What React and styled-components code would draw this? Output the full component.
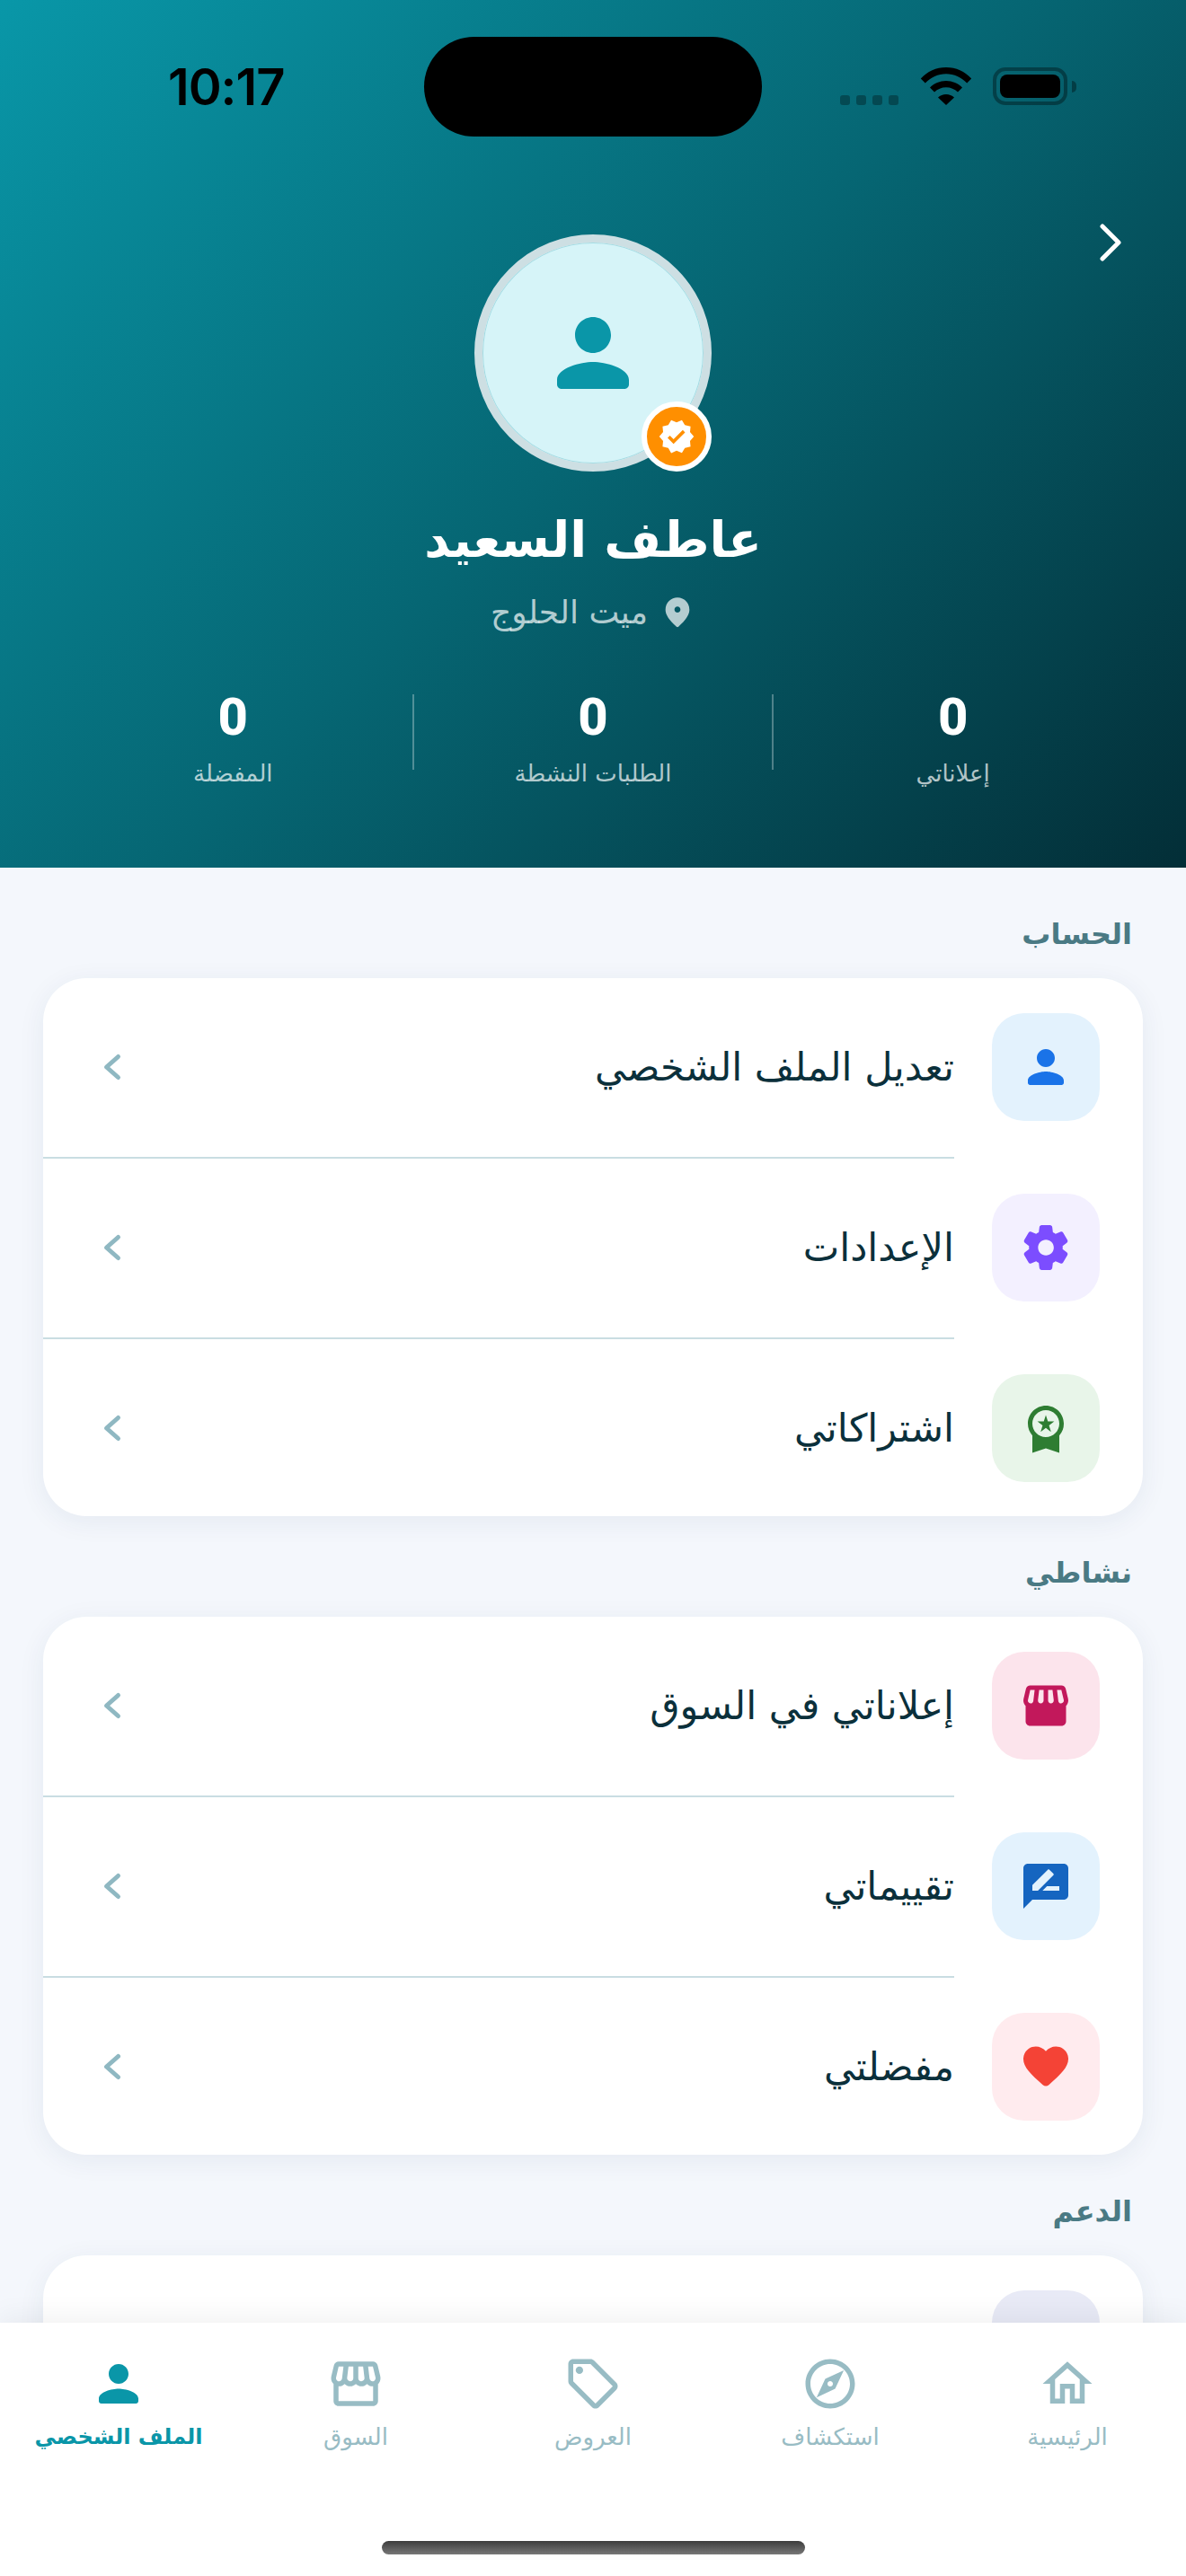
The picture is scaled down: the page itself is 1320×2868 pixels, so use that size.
import React from 'react';
import styled, { createGlobalStyle } from 'styled-components';
import {
  MdRateReview,
  MdOutlineStorefront,
  MdWorkspacePremium,
  MdVerified,
  MdOutlineHome,
  MdOutlineExplore,
  MdOutlineLocalOffer,
} from 'react-icons/md';

const FONT = '"DejaVu Sans", "Noto Sans", sans-serif';

const GlobalStyle = createGlobalStyle`
  html, body { margin: 0; padding: 0; background: #f4f7fc; }
  * { box-sizing: border-box; }
`;

const PERSON =
  'M12 12c2.21 0 4-1.79 4-4s-1.79-4-4-4-4 1.79-4 4 1.79 4 4 4zm0 2c-2.67 0-8 1.34-8 4v1c0 .55.45 1 1 1h14c.55 0 1-.45 1-1v-1c0-2.66-5.33-4-8-4z';
const GEAR =
  'M19.5 12c0-.23-.01-.45-.03-.68l1.86-1.41c.4-.3.51-.86.26-1.3l-1.87-3.23c-.25-.44-.79-.62-1.25-.42l-2.15.91c-.37-.26-.76-.49-1.17-.68l-.29-2.31c-.06-.5-.49-.88-.99-.88h-3.73c-.51 0-.94.38-1 .88l-.29 2.31c-.41.19-.8.42-1.17.68l-2.15-.91c-.46-.2-1-.02-1.25.42L2.41 8.62c-.25.44-.14.99.26 1.3l1.86 1.41c-.02.22-.03.44-.03.67s.01.45.03.68l-1.86 1.41c-.4.3-.51.86-.26 1.3l1.87 3.23c.25.44.79.62 1.25.42l2.15-.91c.37.26.76.49 1.17.68l.29 2.31c.06.5.49.88.99.88h3.73c.5 0 .93-.38.99-.88l.29-2.31c.41-.19.8-.42 1.17-.68l2.15.91c.46.2 1 .02 1.25-.42l1.87-3.23c.25-.44.14-.99-.26-1.3l-1.86-1.41c.03-.23.04-.45.04-.68zm-7.46 3.5c-1.93 0-3.5-1.57-3.5-3.5s1.57-3.5 3.5-3.5 3.5 1.57 3.5 3.5-1.57 3.5-3.5 3.5z';
const HEART =
  'M13.35 20.13c-.76.69-1.93.69-2.69-.01l-.11-.1C5.3 15.27 1.87 12.16 2 8.28c.06-1.7.93-3.33 2.34-4.29 2.64-1.8 5.9-.96 7.66 1.1 1.76-2.06 5.02-2.91 7.66-1.1 1.41.96 2.28 2.59 2.34 4.29.14 3.88-3.3 6.99-8.55 11.76l-.1.09z';
const PIN =
  'M12 2c-4.2 0-8 3.22-8 8.2 0 3.18 2.45 6.92 7.34 11.23.38.33.95.33 1.33 0C17.55 17.12 20 13.38 20 10.2 20 5.22 16.2 2 12 2zm0 10c-1.1 0-2-.9-2-2s.9-2 2-2 2 .9 2 2-.9 2-2 2z';
const STORE =
  'M21.9 8.89l-1.05-4.37c-.22-.9-1-1.52-1.91-1.52H5.05c-.9 0-1.69.63-1.9 1.52L2.1 8.89c-.24 1.02-.02 2.06.62 2.88.08.11.19.19.28.29V19c0 1.1.9 2 2 2h14c1.1 0 2-.9 2-2v-6.94c.09-.09.2-.18.28-.28.64-.82.87-1.87.62-2.89zM7.02 5l-.58 4.86c-.08.65-.6 1.14-1.21 1.14-.49 0-.8-.29-.93-.47-.26-.33-.35-.76-.25-1.17L5.05 5h1.97zm11.89-.01l1.05 4.37c.1.42.01.84-.25 1.17-.14.18-.44.47-.94.47-.61 0-1.14-.49-1.21-1.14L16.98 5l1.93-.01zM15.51 9.52c.05.39-.07.78-.33 1.07-.22.26-.54.41-.95.41-.67 0-1.22-.59-1.22-1.31V5h1.96l.54 4.52zM11 9.69c0 .72-.55 1.31-1.29 1.31-.34 0-.65-.15-.89-.41-.25-.29-.37-.68-.33-1.07L9.04 5H11v4.69z';

const Glyph = ({ d, size, color }) => (
  <svg width={size} height={size} viewBox="0 0 24 24" fill={color} aria-hidden="true">
    <path d={d} />
  </svg>
);

const Page = styled.div`
  position: relative;
  width: 1320px;
  height: 2868px;
  overflow: hidden;
  direction: rtl;
  background: #f4f7fc;
  font-family: ${FONT};
`;

const Hero = styled.header`
  position: relative;
  height: 966px;
  display: flex;
  flex-direction: column;
  align-items: center;
  background: linear-gradient(135deg, #0997a8 0%, #066673 50%, #032e37 100%);
`;

const StatusBar = styled.div`
  direction: ltr;
  width: 100%;
  height: 152px;
  padding: 75px 132px 0 187px;
  display: flex;
  justify-content: space-between;
  align-items: flex-start;
`;

const Clock = styled.span`
  font-family: Inter, sans-serif;
  font-weight: 600;
  font-size: 56px;
  line-height: 44px;
  letter-spacing: -1px;
  color: #000;
`;

const Island = styled.div`
  position: absolute;
  top: 41px;
  left: 472px;
  width: 376px;
  height: 111px;
  border-radius: 56px;
  background: #000;
`;

const StatusIcons = styled.div`
  display: flex;
  align-items: flex-end;
  height: 42px;
`;

const Signal = styled.div`
  display: flex;
  gap: 7px;
  margin-right: 24px;
`;

const SignalDot = styled.i`
  width: 11px;
  height: 11px;
  border-radius: 3px;
  background: rgba(0, 0, 0, 0.3);
`;

const Battery = styled.div`
  position: relative;
  margin-left: 23px;
  width: 83px;
  height: 42px;
  padding: 4px;
  border: 4px solid rgba(0, 0, 0, 0.35);
  border-radius: 14px;

  &::before {
    content: '';
    display: block;
    height: 100%;
    border-radius: 8px;
    background: #000;
  }

  &::after {
    content: '';
    position: absolute;
    top: 11px;
    right: -14px;
    width: 5px;
    height: 13px;
    border-radius: 0 5px 5px 0;
    background: rgba(0, 0, 0, 0.35);
  }
`;

const BackArrow = styled.svg`
  position: absolute;
  top: 246px;
  right: 67px;
`;

const Avatar = styled.div`
  position: relative;
  margin-top: 109px;
  width: 264px;
  height: 264px;
  border-radius: 50%;
  border: 9px solid #cddfe3;
  background: #d6f4f8;
  box-shadow: inset 0 0 0 1px rgba(10, 150, 170, 0.25);
  display: flex;
  align-items: center;
  justify-content: center;
`;

const Badge = styled.div`
  position: absolute;
  right: -9px;
  bottom: -9px;
  width: 78px;
  height: 78px;
  border-radius: 50%;
  border: 6px solid #fff;
  background: #ff8f00;
  color: #fff;
  display: flex;
  align-items: center;
  justify-content: center;
`;

const Name = styled.h1`
  margin: 40px 0 0;
  font-size: 55px;
  line-height: 72px;
  font-weight: 700;
  color: #fff;
`;

const Place = styled.div`
  margin-top: 22px;
  display: flex;
  align-items: center;
  gap: 13px;
  font-size: 36px;
  line-height: 46px;
  color: rgba(255, 255, 255, 0.7);
`;

const Stats = styled.div`
  margin-top: 68px;
  width: 1200px;
  display: flex;
  align-items: flex-start;
`;

const Stat = styled.div`
  flex: 1;
  display: flex;
  flex-direction: column;
  align-items: center;
`;

const StatValue = styled.span`
  font-family: Roboto, sans-serif;
  font-weight: 800;
  font-size: 58px;
  line-height: 50px;
  color: #fff;
`;

const StatLabel = styled.span`
  margin-top: 18px;
  font-size: 26px;
  line-height: 40px;
  color: rgba(255, 255, 255, 0.7);
`;

const StatRule = styled.div`
  width: 2px;
  height: 84px;
  background: rgba(255, 255, 255, 0.3);
`;

const Content = styled.main`
  padding: 50px 48px 0;
`;

const SectionTitle = styled.h2`
  margin: 0 12px 25px 0;
  font-size: 32px;
  line-height: 48px;
  font-weight: 700;
  color: #4a7a84;
`;

const Card = styled.section`
  background: #fff;
  border-radius: 48px;
  box-shadow: 0 6px 30px rgba(30, 60, 100, 0.07);
  margin-bottom: 39px;
`;

const Row = styled.div`
  display: flex;
  align-items: center;
  padding: 39px 48px 40px 65px;

  &:last-child {
    padding-bottom: 38px;
  }
`;

const IconBox = styled.div`
  flex: none;
  width: 120px;
  height: 120px;
  border-radius: 36px;
  background: ${(p) => p.$bg};
  color: ${(p) => p.$fg};
  display: flex;
  align-items: center;
  justify-content: center;
`;

const RowText = styled.span`
  flex: 1;
  margin-right: 42px;
  font-size: 43px;
  line-height: 60px;
  color: #0b303b;
`;

const Rule = styled.div`
  height: 2px;
  margin-right: 210px;
  background: #c9dde2;
`;

const BottomNav = styled.nav`
  position: absolute;
  left: 0;
  right: 0;
  bottom: 0;
  height: 282px;
  padding: 35px 0 24px;
  display: flex;
  flex-direction: column;
  align-items: center;
  background: #fff;
  box-shadow: 0 -6px 30px rgba(0, 0, 0, 0.06);
`;

const NavItems = styled.div`
  width: 100%;
  display: flex;
`;

const NavItem = styled.div`
  flex: 1;
  display: flex;
  flex-direction: column;
  align-items: center;
  color: ${(p) => (p.$active ? '#0a96a8' : '#98bcc4')};
`;

const NavLabel = styled.span`
  margin-top: 6px;
  font-size: ${(p) => (p.$active ? 24 : 26)}px;
  line-height: 40px;
  font-weight: ${(p) => (p.$active ? 700 : 400)};
`;

const HomeBar = styled.div`
  margin-top: auto;
  width: 471px;
  height: 15px;
  border-radius: 8px;
  background: linear-gradient(#3c3c3c, #777);
`;

const Chevron = () => (
  <svg width="24" height="36" viewBox="0 0 24 36" fill="none" stroke="#8fb8c2" strokeWidth="5" strokeLinecap="round" strokeLinejoin="round" aria-hidden="true">
    <path d="M18.5 6.5 5.5 18l13 11.5" />
  </svg>
);

const accountRows = [
  { label: 'تعديل الملف الشخصي', bg: '#e3f2fd', fg: '#1a73e8', icon: <Glyph d={PERSON} size={60} color="currentColor" /> },
  { label: 'الإعدادات', bg: '#f3f0ff', fg: '#7c4dff', icon: <Glyph d={GEAR} size={60} color="currentColor" /> },
  { label: 'اشتراكاتي', bg: '#e8f5e9', fg: '#2e7d32', icon: <MdWorkspacePremium size={60} /> },
];

const activityRows = [
  { label: 'إعلاناتي في السوق', bg: '#fce4ec', fg: '#c2185b', icon: <Glyph d={STORE} size={60} color="currentColor" /> },
  { label: 'تقييماتي', bg: '#e3f2fd', fg: '#1565c0', icon: <MdRateReview size={60} /> },
  { label: 'مفضلتي', bg: '#ffebee', fg: '#f44336', icon: <Glyph d={HEART} size={60} color="currentColor" /> },
];

const navItems = [
  { label: 'الرئيسية', icon: <MdOutlineHome size={66} /> },
  { label: 'استكشاف', icon: <MdOutlineExplore size={66} /> },
  { label: 'العروض', icon: <MdOutlineLocalOffer size={66} /> },
  { label: 'السوق', icon: <MdOutlineStorefront size={66} /> },
  { label: 'الملف الشخصي', icon: <Glyph d={PERSON} size={66} color="currentColor" />, active: true },
];

const MenuCard = ({ rows }) => (
  <Card>
    {rows.map((row, i) => (
      <React.Fragment key={row.label}>
        {i > 0 && <Rule />}
        <Row>
          <IconBox $bg={row.bg} $fg={row.fg}>{row.icon}</IconBox>
          <RowText>{row.label}</RowText>
          <Chevron />
        </Row>
      </React.Fragment>
    ))}
  </Card>
);

export default function App() {
  return (
    <Page>
      <GlobalStyle />
      <Hero>
        <StatusBar>
          <Clock>10:17</Clock>
          <StatusIcons>
            <Signal>
              <SignalDot />
              <SignalDot />
              <SignalDot />
              <SignalDot />
            </Signal>
            <svg width="58" height="42" viewBox="0 0 58 42" aria-hidden="true">
              <path d="M29 0C18 0 8 4.500 .8 12.600l5 5C12 11 20 7.200 29 7.200S46 11 52.200 17.600l5-5C50 4.500 40 0 29 0z" />
              <path d="M29 15c-7 0-13.300 2.800-18 7.500l5 5c3.400-3.300 8-5.300 13-5.300s9.600 2 13 5.300l5-5C42.300 17.800 36 15 29 15z" />
              <path d="M29 30c-3.500 0-6.600 1.300-9 3.500L29 42l9-8.500c-2.400-2.200-5.500-3.500-9-3.500z" />
            </svg>
            <Battery />
          </StatusIcons>
        </StatusBar>
        <Island />
        <BackArrow width="32" height="48" viewBox="0 0 32 48" fill="none" stroke="#fff" strokeWidth="5" strokeLinecap="round" strokeLinejoin="round">
          <path d="M6 6l18 18L6 42" />
        </BackArrow>
        <Avatar>
          <Glyph d={PERSON} size={120} color="#0a96a8" />
          <Badge>
            <MdVerified size={42} />
          </Badge>
        </Avatar>
        <Name>عاطف السعيد</Name>
        <Place>
          <Glyph d={PIN} size={40} color="rgba(255,255,255,0.7)" />
          <span>ميت الحلوج</span>
        </Place>
        <Stats>
          <Stat>
            <StatValue>0</StatValue>
            <StatLabel>إعلاناتي</StatLabel>
          </Stat>
          <StatRule />
          <Stat>
            <StatValue>0</StatValue>
            <StatLabel>الطلبات النشطة</StatLabel>
          </Stat>
          <StatRule />
          <Stat>
            <StatValue>0</StatValue>
            <StatLabel>المفضلة</StatLabel>
          </Stat>
        </Stats>
      </Hero>
      <Content>
        <SectionTitle>الحساب</SectionTitle>
        <MenuCard rows={accountRows} />
        <SectionTitle>نشاطي</SectionTitle>
        <MenuCard rows={activityRows} />
        <SectionTitle>الدعم</SectionTitle>
        <Card>
          <Row>
            <IconBox $bg="#e8eaf6" $fg="#3f51b5" />
          </Row>
        </Card>
      </Content>
      <BottomNav>
        <NavItems>
          {navItems.map((item) => (
            <NavItem key={item.label} $active={item.active}>
              {item.icon}
              <NavLabel $active={item.active}>{item.label}</NavLabel>
            </NavItem>
          ))}
        </NavItems>
        <HomeBar />
      </BottomNav>
    </Page>
  );
}
